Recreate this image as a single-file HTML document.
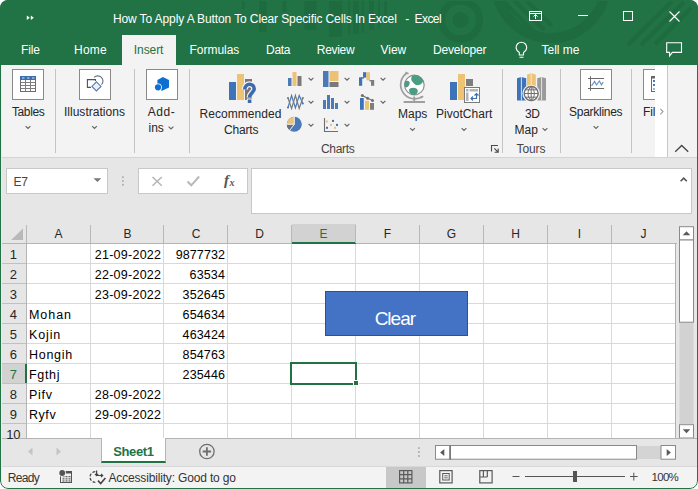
<!DOCTYPE html>
<html><head><meta charset="utf-8">
<style>
*{box-sizing:border-box;margin:0;padding:0}
html,body{width:698px;height:489px;overflow:hidden;background:#fff}
body{font-family:"Liberation Sans",sans-serif;position:relative}
.a{position:absolute}
.t{position:absolute;white-space:pre;font-family:"Liberation Sans",sans-serif}
#win{position:absolute;left:0;top:0;width:698px;height:489px;background:#e6e6e6;overflow:hidden;border-radius:8px}
#title{position:absolute;left:0;top:0;width:698px;height:65px;background:#217346;overflow:hidden}
#ribbon{position:absolute;left:1px;top:65px;width:696px;height:93px;background:#f3f3f3;border-bottom:1px solid #d4d4d4}
.sep{position:absolute;top:69px;width:1px;height:84px;background:#c4c4c4}
.ibox{position:absolute;top:69px;width:32px;height:31px;background:#fff;border:1px solid #8a8a8a}
.hl{position:absolute;left:27px;width:649px;height:1px;background:#d9d9d9}
.vl{position:absolute;top:244px;width:1px;height:194px;background:#d9d9d9}
.hsep{position:absolute;top:225px;width:1px;height:18px;background:#b8b8b8}
</style></head><body>
<div id="win">
<!-- ================= TITLE ================= -->
<div id="title">
  <svg class="a" style="left:0;top:0" width="698" height="65" viewBox="0 0 698 65">
    <g fill="#1d6b3f">
      <rect x="242" y="0" width="2.500" height="9"/>
      <rect x="259" y="0" width="7.500" height="32"/>
      <rect x="282.500" y="0" width="4" height="12"/>
      <rect x="304.500" y="0" width="12" height="30"/>
      <rect x="329" y="0" width="13" height="37"/>
      <rect x="348" y="0" width="2.200" height="35"/>
      <rect x="353" y="0" width="6" height="34"/>
      <rect x="361.700" y="0" width="2.300" height="33"/>
      <rect x="369" y="0" width="5" height="30"/>
      <rect x="378" y="0" width="2" height="28"/>
      <rect x="384" y="0" width="3" height="24"/>
      <circle cx="460.600" cy="20" r="8"/>
    </g>
    <g fill="none" stroke="#1d6b3f">
      <circle cx="460.600" cy="20" r="19" stroke-width="7"/>
      <circle cx="551" cy="-17" r="55" stroke-width="10"/>
      <g stroke-width="4" stroke="#1d6b3f">
        <path d="M502 0l34 34M514 0l30 30M526 0l26 26"/>
        <path d="M628 45l44-44M641 45l43-43M655 44l36-36"/>
      </g>
    </g>
    <!-- quick access >> -->
    <path d="M26.800 15.500l3 2.300-3 2.300zM30.800 15.500l3 2.300-3 2.300z" fill="#fff"/>
    <!-- ribbon display -->
    <g fill="none" stroke="#fff" stroke-width="1">
      <rect x="529.5" y="11.5" width="12" height="9"/>
      <path d="M529.5 13.5h12M535.5 19v-4.5M533.5 16.5l2-2 2 2"/>
    </g>
    <!-- min / max / close -->
    <path d="M578 15.5h10" stroke="#fff" stroke-width="1"/>
    <rect x="623.5" y="11.500" width="9" height="9" fill="none" stroke="#fff" stroke-width="1"/>
    <path d="M669.500 11.500l10 10M679.500 11.500l-10 10" stroke="#fff" stroke-width="1.100" fill="none"/>
    <!-- lightbulb -->
    <g fill="none" stroke="#fff" stroke-width="1.100">
      <path d="M519.300 55v-2.500c-2.200-1.500-3.200-3-3.200-5a5.300 5.300 0 0 1 10.600 0c0 2-1 3.500-3.200 5v2.500z"/>
      <path d="M519.500 57.300h4"/>
    </g>
    <!-- comments -->
    <path d="M666.700 42.700h14.800v9.700h-9.100l-2.800 3.500v-3.500h-2.900z" fill="none" stroke="#fff" stroke-width="1.100"/>
  </svg>
  <!-- active tab -->
  <div class="a" style="left:122px;top:35px;width:54px;height:30px;background:#f3f3f3"></div>
</div>
<!-- ================= RIBBON ================= -->
<div id="ribbon"></div>
<div class="sep" style="left:55px"></div>
<div class="sep" style="left:134px"></div>
<div class="sep" style="left:189px"></div>
<div class="sep" style="left:502px"></div>
<div class="sep" style="left:560px"></div>
<div class="sep" style="left:631px"></div>
<div class="ibox" style="left:12px"></div>
<div class="ibox" style="left:79px"></div>
<div class="ibox" style="left:146px"></div>
<div class="ibox" style="left:580px"></div>
<div class="ibox" style="left:643px;width:13px;border-right:0"></div>
<svg class="a" style="left:0;top:65px" width="698" height="93" viewBox="0 65 698 93">
  <!-- Tables icon -->
  <g>
    <rect x="20.500" y="76.500" width="15" height="15" fill="#fff" stroke="#6e6e6e"/>
    <rect x="20" y="76" width="16" height="4" fill="#3d6fb0"/>
    <path d="M22 78h2.500M27 78h2.500M32 78h2.500" stroke="#cfe0f3" stroke-width="1"/>
    <path d="M20.500 82.500h15M20.500 85.500h15M20.500 88.500h15M25.500 80v11.500M30.500 80v11.500" stroke="#7e7e7e" fill="none"/>
  </g>
  <!-- Illustrations icon -->
  <g fill="none" stroke-width="1.100">
    <path d="M91 87.400h-3.600v-7.800h8.100v1.400" stroke="#44546a"/>
    <path d="M94.100 77.400a4.900 4.900 0 0 1 7.400 7.200" stroke="#5a6f8a"/>
    <path d="M96.400 81.800l4.600 4.600-4.600 4.600-4.500-4.600z" fill="#e6f2fb" stroke="#5a78a8"/>
  </g>
  <!-- Add-ins icon -->
  <g fill="#0b70d1">
    <path d="M162.900 77.100l6.100 3v7.400l-6.900 3.300-4.700-2.300v-8.400z"/>
    <circle cx="158" cy="87.300" r="3.900" fill="#fff"/>
    <circle cx="158" cy="87.300" r="3.100"/>
  </g>
  <!-- Recommended charts -->
  <g>
    <rect x="229" y="82" width="7" height="18" fill="#3f73b7"/>
    <rect x="237" y="74" width="7" height="26" fill="#eec373"/>
    <rect x="245" y="79" width="7" height="21" fill="#7f7474"/>
    <g fill="none" stroke="#f3f3f3" stroke-width="6"><path d="M244.800 89.600C244.800 82.600 254.200 82.800 254.200 88.800C254.200 92.600 249.600 93 249.600 97.600"/></g>
    <rect x="246.800" y="98.500" width="5.600" height="5.500" fill="#f3f3f3"/>
    <g fill="none" stroke="#3c6cb0" stroke-width="3.600"><path d="M244.800 89.600C244.800 82.600 254.200 82.800 254.200 88.800C254.200 92.600 249.600 93 249.600 97.600"/></g>
    <rect x="247.800" y="99.500" width="3.600" height="3.500" fill="#3c6cb0"/>
  </g>
  <!-- small chart icons col1 -->
  <g>
    <rect x="288" y="78" width="3.500" height="8" fill="#4a7ab8"/><rect x="292.500" y="72" width="4" height="14" fill="#ecc277"/><rect x="297.500" y="76" width="4" height="10" fill="#7a7a7a"/>
    <path d="M288 107.500l3.600-12 3.800 12.500 3.800-12.500 3.600 8" stroke="#4a7ab8" fill="none" stroke-width="1.200"/>
    <path d="M288 98l3.600 10.500 3.800-13 3.800 13 3.600-10.500" stroke="#7a7a7a" fill="none" stroke-width="1.200"/>
    <circle cx="288" cy="107.500" r="1.100" fill="#4a7ab8"/><circle cx="302.800" cy="103.500" r="1.100" fill="#4a7ab8"/>
    <circle cx="288" cy="98" r="1.100" fill="#7a7a7a"/><circle cx="302.800" cy="98" r="1.100" fill="#7a7a7a"/>
    <g transform="translate(-.2 -.7)"><circle cx="294.500" cy="125" r="7.500" fill="#4a7ab8"/>
    <path d="M294.500 125v-7.500a7.500 7.500 0 0 0-7.500 7.500z" fill="#ecc277"/>
    <path d="M294.500 125h-7.500a7.500 7.500 0 0 0 3 6z" fill="#6e6e78"/>
    <path d="M294.500 117v8l-5 6.500M294.500 125h-8" stroke="#f3f3f3" fill="none"/></g>
  </g>
  <!-- col2 -->
  <g>
    <rect x="323" y="71" width="5.500" height="16" fill="#4a7ab8"/><rect x="329.500" y="71" width="9" height="10" fill="#ecc277"/><rect x="329.500" y="82" width="9" height="5" fill="#7a7a7a"/>
    <rect x="323" y="100" width="3" height="9" fill="#4a7ab8"/><rect x="327" y="95" width="3" height="14" fill="#4a7ab8"/><rect x="331" y="98" width="3" height="11" fill="#4a7ab8"/><rect x="335" y="103" width="3" height="6" fill="#4a7ab8"/>
    <path d="M324.500 118v13.500h13.500" stroke="#6e6e6e" fill="none" stroke-width="1.100"/>
    <g fill="#4a6fa5"><rect x="332" y="119.900" width="2" height="2"/><rect x="336" y="123.900" width="2" height="2"/><rect x="326" y="126.800" width="2" height="2"/></g>
    <g fill="#e6c27e"><rect x="325.800" y="120.500" width="2" height="2"/><rect x="330" y="123.900" width="2" height="2"/><rect x="334" y="126.800" width="2" height="2"/></g>
  </g>
  <!-- col3 -->
  <g>
    <rect x="359" y="77.300" width="3.200" height="8.500" fill="#3f73b7"/><rect x="361" y="77.300" width="3" height="1.300" fill="#3f73b7"/><rect x="363" y="72.200" width="3.400" height="5.400" fill="#3f73b7"/>
    <rect x="366.400" y="72.200" width="3.600" height="8.100" fill="#eec373"/>
    <rect x="369.500" y="80" width="2" height="1.400" fill="#7e7e7e"/><rect x="371" y="80" width="3.200" height="5.800" fill="#7e7e7e"/>
    <rect x="360" y="98" width="3.800" height="11.800" fill="#3f73b7"/><rect x="365" y="100.800" width="4" height="9" fill="#eec373"/><rect x="370" y="103" width="4" height="6.800" fill="#7e7e7e"/>
    <path d="M362.300 95.400l5.300 2.800 4.900 2.300" stroke="#6e6e6e" fill="none" stroke-width="1.100"/>
    <circle cx="362.300" cy="95.400" r="1.500" fill="#6e6e6e"/><circle cx="367.600" cy="98.200" r="1.500" fill="#6e6e6e"/><circle cx="372.500" cy="100.500" r="1.500" fill="#6e6e6e"/>
  </g>
  <!-- chevrons small -->
  <g fill="none" stroke="#666" stroke-width="1.150">
    <path d="M308.6 77.8l2.4 2.4 2.4-2.4M308.6 100.8l2.4 2.4 2.4-2.4M308.6 123.8l2.4 2.4 2.4-2.4M344.6 77.8l2.4 2.4 2.4-2.4M344.6 100.8l2.4 2.4 2.4-2.4M344.6 123.8l2.4 2.4 2.4-2.4M380.6 77.8l2.4 2.4 2.4-2.4M380.6 100.8l2.4 2.4 2.4-2.4M25.6 126.1l2.4 2.4 2.4-2.4M92.1 126.1l2.4 2.4 2.4-2.4M168.6 126.6l2.4 2.4 2.4-2.4M410.1 128.1l2.4 2.4 2.4-2.4M461.6 128.1l2.4 2.4 2.4-2.4M542.6 128.1l2.4 2.4 2.4-2.4M593.6 126.1l2.4 2.4 2.4-2.4"/>
  </g>
  <!-- Maps globe -->
  <g>
    <circle cx="414.400" cy="85" r="9.800" fill="#fff" stroke="#8e8e8e" stroke-width="1.200"/>
    <path transform="translate(414.400 85) scale(1.180) translate(-414.400 -85)" d="M412.500 77.300c3.500-1.500 8 .5 9.500 4.200c-.8 2.500-3 4-5.300 3.700s-2.500-1.500-3.800-2.700s-1.700-3.700-.4-5.200zM406.600 82c1.800-1.200 3.800-.5 3.800 1.300s-1.500 3.500-2.800 3.700s-1.500-1.500-1.700-2.500s.2-1.800 .7-2.500zM410.300 88.200c2.200-1.500 6-1 6.800 1s-1 4.300-3.500 4.300s-4.600-3.500-3.300-5.300z" fill="#4a9c82"/>
    <path d="M407 73a13 13 0 0 0 15.500 23.500" fill="none" stroke="#9e9e9e" stroke-width="1.700"/>
    <path d="M405.500 72.300l3 1.400M420.500 98l2.700-1.800" stroke="#9e9e9e" stroke-width="1.600"/>
    <path d="M414.200 96.500v5M403.600 102h21.400" stroke="#9e9e9e" stroke-width="1.800" fill="none"/>
  </g>
  <!-- PivotChart -->
  <g>
    <rect x="450" y="82" width="7" height="18" fill="#3f73b7"/>
    <rect x="458" y="74" width="7" height="26" fill="#eec373"/>
    <rect x="466" y="79" width="7" height="7" fill="#7e7e7e"/>
    <rect x="464.500" y="87.500" width="15" height="15" fill="#fff" stroke="#7a7a7a"/>
    <rect x="466" y="89" width="2.500" height="2.500" fill="#b4b4b4"/>
    <rect x="469.500" y="89" width="8.500" height="2.500" fill="#b4b4b4"/>
    <rect x="466" y="92.500" width="2.500" height="8.500" fill="#b4b4b4"/>
    <path d="M471 98.500h5.500v-5M474.500 95.500l2-2 2 2M473 96.500l-2 2 2 2" stroke="#3d6fb0" fill="none" stroke-width="1.200"/>
  </g>
  <!-- dialog launcher -->
  <path d="M491.500 151.600v-6.100h6.400M494.300 148.300l3.700 3.700M498.200 148.500v3.700h-3.600" fill="none" stroke="#4a4a4a" stroke-width="1.100"/>
  <!-- 3D map -->
  <g>
    <path d="M517 78.300l4.400-1.300 4.800 1.300v22.100h-9.200z" fill="#3f73b7"/>
    <path d="M527 74.500l4.200-1.200 4.600 1.200v14h-8.800z" fill="#eec373"/>
    <path d="M537.200 78.300l4.400-1.300 4.400 1.300v22.100h-8.800z" fill="#9a9a9a"/>
    <path d="M521.400 77v23.400M531.200 73.300v14M541.600 77v23.400" stroke="#e8eef6" stroke-width=".9" fill="none"/>
    <circle cx="531.200" cy="93.500" r="7.300" fill="#fff" stroke="#f3f3f3" stroke-width="3"/>
    <circle cx="531.200" cy="93.500" r="7" fill="#fff" stroke="#6e6e6e" stroke-width="1.400"/>
    <path d="M524.200 93.500h14M531.200 86.500v14M531.200 86.500c-4.200 3-4.200 11 0 14M531.200 86.500c4.200 3 4.200 11 0 14M525.500 89.800h11.400M525.500 97.200h11.400" fill="none" stroke="#6e6e6e" stroke-width="1"/>
  </g>
  <!-- sparklines -->
  <g fill="none">
    <path d="M590.500 76.200v14.600M588 78.500h16.100M588 88.500h16.100" stroke="#6a6a6a" stroke-width="1"/>
    <path d="M591.500 85.800l3.100-4.300 1.900 3.500 2.900-4 2.100 3.800 1.700-2.800" stroke="#6d93c4" stroke-width="1.200"/>
  </g>
  <!-- filters partial -->
  <g>
    <rect x="651.500" y="76.500" width="8" height="15" fill="#fff" stroke="#6a6a6a"/>
    <rect x="651" y="76" width="8" height="2.500" fill="#666"/>
    <rect x="653" y="80" width="2.500" height="2" fill="#4a7ab8"/>
    <rect x="653" y="84" width="2.500" height="2" fill="#4a7ab8"/>
    <rect x="653" y="88" width="2.500" height="2" fill="#9ab6da"/>
  </g>
  <!-- ribbon scroll strip -->
  <rect x="655" y="65" width="12.500" height="92" fill="#fff"/>
  <rect x="667" y="65" width="1" height="92" fill="#c8c8c8"/>
  <path d="M660.300 108.800l2.700 2.800-2.700 2.800" fill="none" stroke="#9a9a9a" stroke-width="1.100"/>
  <!-- collapse -->
  <path d="M675.200 151.800l6.500-6.300 6.500 6.300" fill="none" stroke="#444" stroke-width="1.300"/>
</svg>
<!-- ================= FORMULA BAR ================= -->
<div class="a" style="left:6px;top:168px;width:102px;height:26px;background:#fff;border:1px solid #c8c8c8"></div>
<div class="a" style="left:138px;top:168px;width:110px;height:26px;background:#fff;border:1px solid #c8c8c8"></div>
<div class="a" style="left:251px;top:168px;width:441px;height:46px;background:#fff;border:1px solid #c8c8c8"></div>
<svg class="a" style="left:0;top:158px" width="698" height="67" viewBox="0 158 698 67">
  <path d="M93.500 178.200h7.800l-3.900 3.900z" fill="#777"/>
  <g fill="#b0b0b0"><rect x="122" y="176.300" width="1.800" height="1.800"/><rect x="122" y="180.100" width="1.800" height="1.800"/><rect x="122" y="183.900" width="1.800" height="1.800"/></g>
  <path d="M152.500 177l9.300 8.800M161.800 177l-9.300 8.800" stroke="#b4b4b4" stroke-width="1.500" fill="none"/>
  <path d="M187.500 181.500l3.800 3.800 7.800-8.800" stroke="#b8b8b8" stroke-width="2" fill="none"/>
  <text x="224" y="185.200" font-family="Liberation Serif" font-style="italic" font-weight="700" font-size="15" fill="#555">f</text>
  <text x="229.500" y="186" font-family="Liberation Serif" font-style="italic" font-weight="700" font-size="10" fill="#555">x</text>
  <path d="M680.600 181.300l3.100-3.200 3.100 3.200" fill="none" stroke="#555" stroke-width="1.600"/>
</svg>
<!-- ================= GRID ================= -->
<div class="a" style="left:2px;top:244px;width:674px;height:194px;background:#fff"></div>
<!-- headers bg -->
<div class="a" style="left:2px;top:225px;width:675px;height:19px;background:#e6e6e6;border-bottom:1px solid #b4b4b4"></div>
<div class="a" style="left:2px;top:244px;width:25px;height:194px;background:#e6e6e6;border-right:1px solid #b4b4b4"></div>
<!-- selected col/row header -->
<div class="a" style="left:292px;top:224px;width:64px;height:20px;background:#d2d2d2;border-bottom:2px solid #217346"></div>
<div class="a" style="left:2px;top:364px;width:25px;height:19px;background:#d2d2d2;border-right:2px solid #217346"></div>
<!-- corner triangle -->
<svg class="a" style="left:0;top:225px" width="30" height="19" viewBox="0 225 30 19"><path d="M23 228.400v11.600h-11.800z" fill="#b9b9b9"/></svg>
<div class="hl" style="top:263px"></div>
<div class="hl" style="top:283px"></div>
<div class="hl" style="top:303px"></div>
<div class="hl" style="top:323px"></div>
<div class="hl" style="top:343px"></div>
<div class="hl" style="top:363px"></div>
<div class="hl" style="top:383px"></div>
<div class="hl" style="top:403px"></div>
<div class="hl" style="top:423px"></div>
<div class="vl" style="left:90px"></div>
<div class="hsep" style="left:90px"></div>
<div class="vl" style="left:163px"></div>
<div class="hsep" style="left:163px"></div>
<div class="vl" style="left:227px"></div>
<div class="hsep" style="left:227px"></div>
<div class="vl" style="left:291px"></div>
<div class="hsep" style="left:291px"></div>
<div class="vl" style="left:355px"></div>
<div class="hsep" style="left:355px"></div>
<div class="vl" style="left:419px"></div>
<div class="hsep" style="left:419px"></div>
<div class="vl" style="left:483px"></div>
<div class="hsep" style="left:483px"></div>
<div class="vl" style="left:547px"></div>
<div class="hsep" style="left:547px"></div>
<div class="vl" style="left:611px"></div>
<div class="hsep" style="left:611px"></div>
<div class="vl" style="left:675px;background:#b0b0b0"></div>
<div class="hsep" style="left:26px"></div>
<div class="a" style="left:2px;top:263px;width:24px;height:1px;background:#c0c0c0"></div>
<div class="a" style="left:2px;top:283px;width:24px;height:1px;background:#c0c0c0"></div>
<div class="a" style="left:2px;top:303px;width:24px;height:1px;background:#c0c0c0"></div>
<div class="a" style="left:2px;top:323px;width:24px;height:1px;background:#c0c0c0"></div>
<div class="a" style="left:2px;top:343px;width:24px;height:1px;background:#c0c0c0"></div>
<div class="a" style="left:2px;top:363px;width:24px;height:1px;background:#c0c0c0"></div>
<div class="a" style="left:2px;top:383px;width:24px;height:1px;background:#c0c0c0"></div>
<div class="a" style="left:2px;top:403px;width:24px;height:1px;background:#c0c0c0"></div>
<div class="a" style="left:2px;top:423px;width:24px;height:1px;background:#c0c0c0"></div>
<!-- button shape -->
<div class="a" style="left:325px;top:291px;width:143px;height:45px;background:#4472c4;border:1px solid #2f528f"></div>
<!-- selection -->
<div class="a" style="left:290px;top:362px;width:67px;height:23px;border:2px solid #217346"></div>
<div class="a" style="left:353px;top:380px;width:6px;height:6px;background:#217346;border:1px solid #fff"></div>
<!-- vertical scrollbar -->
<svg class="a" style="left:676px;top:220px" width="22" height="220" viewBox="676 220 22 220">
  <rect x="679.500" y="240" width="14" height="184" fill="#d2d2d2" stroke="none"/>
  <rect x="679.500" y="226.700" width="14" height="13.300" fill="#fff" stroke="#8a8a8a"/>
  <rect x="679.500" y="240" width="14" height="82.200" fill="#fff" stroke="#8a8a8a"/>
  <rect x="679.500" y="424.700" width="14" height="13.300" fill="#fff" stroke="#8a8a8a"/>
  <path d="M682.700 235.200h7.600l-3.800-4z" fill="#5a5a5a"/>
  <path d="M682.700 429.300h7.600l-3.800 4z" fill="#5a5a5a"/>
</svg>
<!-- ================= SHEET TAB BAR ================= -->
<div class="a" style="left:1px;top:438px;width:696px;height:28px;background:#e6e6e6;border-top:1px solid #b4b4b4"></div>
<div class="a" style="left:101px;top:438px;width:65px;height:25px;background:#fff;border-left:1px solid #b4b4b4;border-right:1px solid #b4b4b4;border-bottom:2px solid #217346"></div>
<svg class="a" style="left:0;top:438px" width="698" height="51" viewBox="0 438 698 51">
  <path d="M32.500 447.500v8l-4.500-4zM56.500 447.500v8l4.500-4z" fill="#c4c4c4"/>
  <circle cx="206.900" cy="451.500" r="7.200" fill="none" stroke="#6e6e6e" stroke-width="1.300"/>
  <path d="M202.700 451.500h8.400M206.900 447.300v8.400" stroke="#6e6e6e" stroke-width="1.800"/>
  <g fill="#b0b0b0"><rect x="418" y="447.200" width="1.800" height="1.800"/><rect x="418" y="451.100" width="1.800" height="1.800"/><rect x="418" y="455.100" width="1.800" height="1.800"/></g>
  <!-- h scroll -->
  <rect x="435.500" y="445.500" width="14.500" height="13.700" fill="#fff" stroke="#8a8a8a"/>
  <rect x="450" y="445.500" width="186.500" height="13.700" fill="#fff" stroke="#8a8a8a"/>
  <rect x="449.500" y="445" width="1.500" height="14.700" fill="#7a7a7a"/>
  <rect x="637" y="446" width="24" height="13" fill="#d4d4d4"/>
  <rect x="661" y="445.500" width="14.500" height="13.700" fill="#fff" stroke="#8a8a8a"/>
  <path d="M444.300 449v7l-4.200-3.500zM666.700 449v7l4.200-3.500z" fill="#5a5a5a"/>
</svg>
<!-- ================= STATUS BAR ================= -->
<div class="a" style="left:1px;top:466px;width:696px;height:22px;background:#f3f3f3;border-top:1px solid #d8d8d8"></div>
<div class="a" style="left:386px;top:467px;width:40px;height:21px;background:#c8c8c8"></div>
<svg class="a" style="left:0;top:465px" width="698" height="24" viewBox="0 465 698 24">
  <!-- macro icon -->
  <g>
    <rect x="60.500" y="471.500" width="11" height="11" fill="#f3f3f3" stroke="#555"/>
    <rect x="60" y="471" width="12" height="2.500" fill="#555"/>
    <g fill="#666"><rect x="62.500" y="476" width="2" height="1.300"/><rect x="65.500" y="476" width="2" height="1.300"/><rect x="68.500" y="476" width="2" height="1.300"/>
    <rect x="62.500" y="478.200" width="2" height="1.300"/><rect x="65.500" y="478.200" width="2" height="1.300"/><rect x="68.500" y="478.200" width="2" height="1.300"/>
    <rect x="62.500" y="480.300" width="2" height="1.300"/><rect x="65.500" y="480.300" width="2" height="1.300"/><rect x="68.500" y="480.300" width="2" height="1.300"/></g>
    <circle cx="62.200" cy="473" r="3.700" fill="#f3f3f3"/>
    <circle cx="62.200" cy="473" r="2.900" fill="#555"/>
  </g>
  <!-- accessibility icon -->
  <g fill="none" stroke="#444" stroke-width="1.200">
    <path d="M95.300 471.700a5.300 5.300 0 0 0 0 10.600" stroke-dasharray="3 1.500"/>
    <path d="M96.600 470.500v5h6M95 473.800l1.600 1.700 1.600-1.700M101 473.800l1.700 1.700-1.700 1.700"/>
    <path d="M98 480.600l2.700 2.900 4.700-5.500" stroke-width="1.600"/>
  </g>
  <!-- view icons -->
  <g fill="none" stroke="#5a5a5a" stroke-width="1.200">
    <rect x="399.600" y="470.600" width="12.300" height="12.300"/>
    <path d="M399.600 474.700h12.300M399.600 478.800h12.300M403.700 470.600v12.300M407.800 470.600v12.300"/>
    <rect x="439.800" y="470.600" width="12.300" height="12.300"/>
    <rect x="442.700" y="473.500" width="6.500" height="6.500" stroke-width="1"/>
    <path d="M444.300 475.800h3.400M444.300 477.800h3.400" stroke-width=".9"/>
    <rect x="479.800" y="470.600" width="12.300" height="12.300"/>
    <path d="M483.400 470.600v6.400M487.300 470.600v6.400M479.800 477h7.500"/>
  </g>
  <!-- zoom -->
  <path d="M512.500 476.500h7M525 476.500h100M630 476.500h7.600M633.800 472.700v7.800" stroke="#555" stroke-width="1" fill="none"/>
  <rect x="573" y="471" width="4" height="11" fill="#555"/>
</svg>
<!-- window borders -->
<div class="a" style="left:1px;top:65px;width:1px;height:420px;background:#e4f1ea"></div>
<div class="a" style="left:0;top:0;width:698px;height:489px;border:1px solid #217346;border-radius:8px"></div>
<!-- ================= TEXT ================= -->
<span class="t" style="left:112.92px;top:10.00px;font-size:12px;line-height:18px;color:#fff;letter-spacing:-0.109px;font-weight:400">How To Apply A Button To Clear Specific Cells In Excel</span>
<span class="t" style="left:405.20px;top:10.00px;font-size:12px;line-height:18px;color:#fff;letter-spacing:0.000px;font-weight:400">-</span>
<span class="t" style="left:414.52px;top:10.00px;font-size:12px;line-height:18px;color:#fff;letter-spacing:-0.561px;font-weight:400">Excel</span>
<span class="t" style="left:21.02px;top:41.00px;font-size:12px;line-height:18px;color:#fff;letter-spacing:-0.151px;font-weight:400">File</span>
<span class="t" style="left:74.02px;top:41.00px;font-size:12px;line-height:18px;color:#fff;letter-spacing:0.256px;font-weight:400">Home</span>
<span class="t" style="left:133.82px;top:41.00px;font-size:12px;line-height:18px;color:#217346;letter-spacing:-0.079px;font-weight:400">Insert</span>
<span class="t" style="left:189.52px;top:41.00px;font-size:12px;line-height:18px;color:#fff;letter-spacing:-0.022px;font-weight:400">Formulas</span>
<span class="t" style="left:266.02px;top:41.00px;font-size:12px;line-height:18px;color:#fff;letter-spacing:-0.305px;font-weight:400">Data</span>
<span class="t" style="left:316.82px;top:41.00px;font-size:12px;line-height:18px;color:#fff;letter-spacing:-0.320px;font-weight:400">Review</span>
<span class="t" style="left:380.52px;top:41.00px;font-size:12px;line-height:18px;color:#fff;letter-spacing:-0.039px;font-weight:400">View</span>
<span class="t" style="left:432.92px;top:41.00px;font-size:12px;line-height:18px;color:#fff;letter-spacing:-0.140px;font-weight:400">Developer</span>
<span class="t" style="left:541.52px;top:41.00px;font-size:12px;line-height:18px;color:#fff;letter-spacing:-0.025px;font-weight:400">Tell me</span>
<span class="t" style="left:12.02px;top:103.00px;font-size:12px;line-height:18px;color:#262626;letter-spacing:-0.408px;font-weight:400">Tables</span>
<span class="t" style="left:63.92px;top:103.00px;font-size:12px;line-height:18px;color:#262626;letter-spacing:0.026px;font-weight:400">Illustrations</span>
<span class="t" style="left:147.72px;top:103.00px;font-size:12px;line-height:18px;color:#262626;letter-spacing:0.570px;font-weight:400">Add-</span>
<span class="t" style="left:148.52px;top:119.00px;font-size:12px;line-height:18px;color:#262626;letter-spacing:-0.001px;font-weight:400">ins</span>
<span class="t" style="left:199.52px;top:105.00px;font-size:12px;line-height:18px;color:#262626;letter-spacing:0.042px;font-weight:400">Recommended</span>
<span class="t" style="left:224.02px;top:121.00px;font-size:12px;line-height:18px;color:#262626;letter-spacing:-0.167px;font-weight:400">Charts</span>
<span class="t" style="left:398.02px;top:105.00px;font-size:12px;line-height:18px;color:#262626;letter-spacing:-0.001px;font-weight:400">Maps</span>
<span class="t" style="left:436.02px;top:105.00px;font-size:12px;line-height:18px;color:#262626;letter-spacing:0.031px;font-weight:400">PivotChart</span>
<span class="t" style="left:525.02px;top:105.00px;font-size:12px;line-height:18px;color:#262626;letter-spacing:-0.502px;font-weight:400">3D</span>
<span class="t" style="left:514.52px;top:121.00px;font-size:12px;line-height:18px;color:#262626;letter-spacing:0.032px;font-weight:400">Map</span>
<span class="t" style="left:569.02px;top:103.00px;font-size:12px;line-height:18px;color:#262626;letter-spacing:-0.269px;font-weight:400">Sparklines</span>
<span class="t" style="left:643.02px;top:103.00px;font-size:12px;line-height:18px;color:#262626;letter-spacing:-0.111px;font-weight:400">Fil</span>
<span class="t" style="left:321.02px;top:140.00px;font-size:12px;line-height:18px;color:#444;letter-spacing:-0.334px;font-weight:400">Charts</span>
<span class="t" style="left:516.52px;top:140.00px;font-size:12px;line-height:18px;color:#444;letter-spacing:-0.101px;font-weight:400">Tours</span>
<span class="t" style="left:13.52px;top:173.00px;font-size:12px;line-height:18px;color:#444;letter-spacing:-0.324px;font-weight:400">E7</span>
<span class="t" style="left:54.49px;top:225.00px;font-size:12px;line-height:18px;color:#262626;letter-spacing:0.000px;font-weight:400">A</span>
<span class="t" style="left:123.49px;top:225.00px;font-size:12px;line-height:18px;color:#262626;letter-spacing:0.000px;font-weight:400">B</span>
<span class="t" style="left:191.66px;top:225.00px;font-size:12px;line-height:18px;color:#262626;letter-spacing:0.000px;font-weight:400">C</span>
<span class="t" style="left:255.16px;top:225.00px;font-size:12px;line-height:18px;color:#262626;letter-spacing:0.000px;font-weight:400">D</span>
<span class="t" style="left:319.49px;top:225.00px;font-size:12px;line-height:18px;color:#217346;letter-spacing:0.000px;font-weight:400">E</span>
<span class="t" style="left:383.83px;top:225.00px;font-size:12px;line-height:18px;color:#262626;letter-spacing:0.000px;font-weight:400">F</span>
<span class="t" style="left:446.83px;top:225.00px;font-size:12px;line-height:18px;color:#262626;letter-spacing:0.000px;font-weight:400">G</span>
<span class="t" style="left:511.16px;top:225.00px;font-size:12px;line-height:18px;color:#262626;letter-spacing:0.000px;font-weight:400">H</span>
<span class="t" style="left:577.83px;top:225.00px;font-size:12px;line-height:18px;color:#262626;letter-spacing:0.000px;font-weight:400">I</span>
<span class="t" style="left:640.50px;top:225.00px;font-size:12px;line-height:18px;color:#262626;letter-spacing:0.000px;font-weight:400">J</span>
<span class="t" style="left:9.68px;top:245.00px;font-size:13px;line-height:19px;color:#262626;letter-spacing:0.000px;font-weight:400">1</span>
<span class="t" style="left:9.68px;top:265.00px;font-size:13px;line-height:19px;color:#262626;letter-spacing:0.000px;font-weight:400">2</span>
<span class="t" style="left:9.68px;top:285.00px;font-size:13px;line-height:19px;color:#262626;letter-spacing:0.000px;font-weight:400">3</span>
<span class="t" style="left:9.68px;top:305.00px;font-size:13px;line-height:19px;color:#262626;letter-spacing:0.000px;font-weight:400">4</span>
<span class="t" style="left:9.68px;top:325.00px;font-size:13px;line-height:19px;color:#262626;letter-spacing:0.000px;font-weight:400">5</span>
<span class="t" style="left:9.68px;top:345.00px;font-size:13px;line-height:19px;color:#262626;letter-spacing:0.000px;font-weight:400">6</span>
<span class="t" style="left:9.68px;top:365.00px;font-size:13px;line-height:19px;color:#217346;letter-spacing:0.000px;font-weight:400">7</span>
<span class="t" style="left:9.68px;top:385.00px;font-size:13px;line-height:19px;color:#262626;letter-spacing:0.000px;font-weight:400">8</span>
<span class="t" style="left:9.68px;top:405.00px;font-size:13px;line-height:19px;color:#262626;letter-spacing:0.000px;font-weight:400">9</span>
<span class="t" style="left:6.18px;top:425.00px;font-size:13px;line-height:19px;color:#262626;letter-spacing:-0.179px;font-weight:400">10</span>
<span class="t" style="left:94.80px;top:246.00px;font-size:12.5px;line-height:18px;color:#000;letter-spacing:0.252px;font-weight:400">21-09-2022</span>
<span class="t" style="left:94.80px;top:266.00px;font-size:12.5px;line-height:18px;color:#000;letter-spacing:0.252px;font-weight:400">22-09-2022</span>
<span class="t" style="left:94.80px;top:286.00px;font-size:12.5px;line-height:18px;color:#000;letter-spacing:0.252px;font-weight:400">23-09-2022</span>
<span class="t" style="left:94.80px;top:386.00px;font-size:12.5px;line-height:18px;color:#000;letter-spacing:0.252px;font-weight:400">28-09-2022</span>
<span class="t" style="left:94.80px;top:406.00px;font-size:12.5px;line-height:18px;color:#000;letter-spacing:0.252px;font-weight:400">29-09-2022</span>
<span class="t" style="left:175.69px;top:246.00px;font-size:12.5px;line-height:18px;color:#000;letter-spacing:0.102px;font-weight:400">9877732</span>
<span class="t" style="left:189.55px;top:266.00px;font-size:12.5px;line-height:18px;color:#000;letter-spacing:0.152px;font-weight:400">63534</span>
<span class="t" style="left:182.62px;top:286.00px;font-size:12.5px;line-height:18px;color:#000;letter-spacing:0.123px;font-weight:400">352645</span>
<span class="t" style="left:182.62px;top:306.00px;font-size:12.5px;line-height:18px;color:#000;letter-spacing:0.123px;font-weight:400">654634</span>
<span class="t" style="left:182.62px;top:326.00px;font-size:12.5px;line-height:18px;color:#000;letter-spacing:0.123px;font-weight:400">463424</span>
<span class="t" style="left:182.62px;top:346.00px;font-size:12.5px;line-height:18px;color:#000;letter-spacing:0.123px;font-weight:400">854763</span>
<span class="t" style="left:182.62px;top:366.00px;font-size:12.5px;line-height:18px;color:#000;letter-spacing:0.123px;font-weight:400">235446</span>
<span class="t" style="left:29.00px;top:306.00px;font-size:12.5px;line-height:18px;color:#000;letter-spacing:0.948px;font-weight:400">Mohan</span>
<span class="t" style="left:29.00px;top:326.00px;font-size:12.5px;line-height:18px;color:#000;letter-spacing:0.856px;font-weight:400">Kojin</span>
<span class="t" style="left:29.00px;top:346.00px;font-size:12.5px;line-height:18px;color:#000;letter-spacing:0.708px;font-weight:400">Hongih</span>
<span class="t" style="left:29.00px;top:366.00px;font-size:12.5px;line-height:18px;color:#000;letter-spacing:0.656px;font-weight:400">Fgthj</span>
<span class="t" style="left:29.00px;top:386.00px;font-size:12.5px;line-height:18px;color:#000;letter-spacing:0.733px;font-weight:400">Pifv</span>
<span class="t" style="left:29.00px;top:406.00px;font-size:12.5px;line-height:18px;color:#000;letter-spacing:0.544px;font-weight:400">Ryfv</span>
<span class="t" style="left:374.64px;top:306.00px;font-size:19px;line-height:25px;color:#fff;letter-spacing:-0.975px;font-weight:400">Clear</span>
<span class="t" style="left:113.18px;top:442.00px;font-size:13px;line-height:19px;color:#217346;letter-spacing:-0.372px;font-weight:700">Sheet1</span>
<span class="t" style="left:7.72px;top:469.00px;font-size:12px;line-height:18px;color:#333;letter-spacing:-0.669px;font-weight:400">Ready</span>
<span class="t" style="left:108.52px;top:469.00px;font-size:12px;line-height:18px;color:#333;letter-spacing:-0.167px;font-weight:400">Accessibility: Good to go</span>
<span class="t" style="left:651.54px;top:469.00px;font-size:11.5px;line-height:16px;color:#333;letter-spacing:-0.704px;font-weight:400">100%</span>
</div>
</body></html>
